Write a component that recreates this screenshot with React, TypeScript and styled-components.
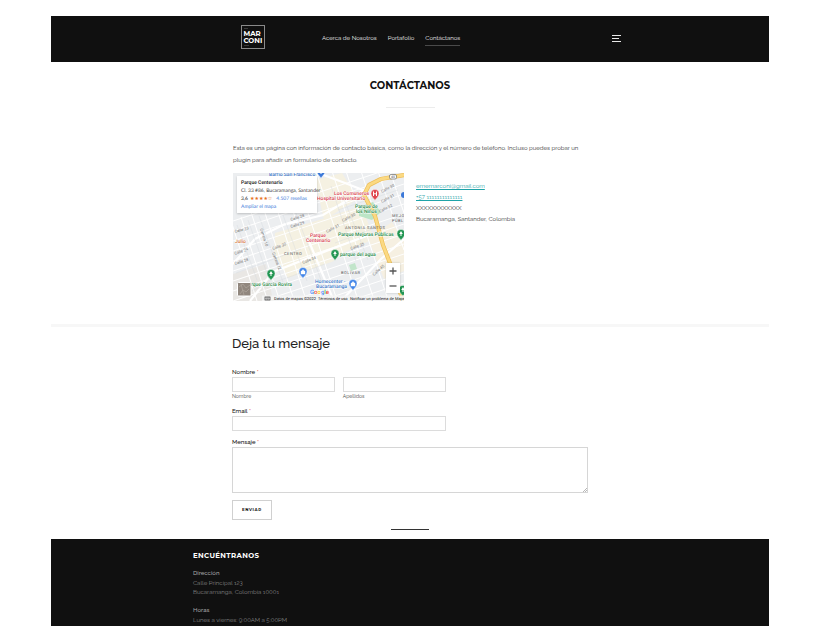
import React from 'react';
import styled, { createGlobalStyle } from 'styled-components';

const GlobalStyle = createGlobalStyle`
  *, *::before, *::after { box-sizing: border-box; }
  body {
    margin: 0;
    background: #fff;
    color: #333;
    font: 6px/12px Raleway, "Open Sans", sans-serif;
  }
  h1, h2, p, address { margin: 0; font-style: normal; }
  input, textarea, button { font-family: inherit; }
`;

const Page = styled.div`
  display: flex;
  flex-direction: column;
  padding: 16px 51px 0;
`;

const Header = styled.header`
  background: #101010;
  padding: 9px 0 13px;
`;

const Container = styled.div`
  width: 100%;
  max-width: 434px;
  margin: 0 auto;
`;

const HeaderBar = styled(Container)`
  display: flex;
  align-items: center;
  height: 24px;
  padding: 0 6px 0 48px;
`;

const LogoLink = styled.a`
  display: block;
  width: 24px;
  height: 24px;
`;

const Nav = styled.nav`
  display: flex;
  flex: 1;
  gap: 11px;
  margin-left: 57px;
  padding-top: 3px;
`;

const NavLink = styled.a<{ $active?: boolean }>`
  color: #f4f4f4;
  font: 6px/14px Raleway, "Open Sans", sans-serif;
  text-decoration: none;
  white-space: nowrap;
  border-bottom: 1px solid ${(p) => (p.$active ? '#4a4a4a' : 'transparent')};
`;

const MenuButton = styled.button`
  display: block;
  width: 9px;
  height: 9px;
  padding: 0;
  margin-top: 3px;
  border: 0;
  background: none;
`;

const TitleArea = styled.div`
  display: flex;
  flex-direction: column;
  align-items: center;
  gap: 14px;
  padding-top: 17px;
`;

const Title = styled.h1`
  color: #111;
  font: 700 10px/14px Montserrat, Inter, sans-serif;
`;

const Rule = styled.div<{ $dark?: boolean }>`
  width: ${(p) => (p.$dark ? 38 : 49)}px;
  height: 1px;
  margin: 0 auto;
  background: ${(p) => (p.$dark ? '#333' : '#ececec')};
`;

const Content = styled.main`
  width: 100%;
  max-width: 356px;
  margin: 0 auto;
`;

const Intro = styled.p`
  padding: 34px 8px 7px 1px;
`;

const ContactRow = styled.div`
  display: flex;
  gap: 12px;
  padding: 0 0 23px 1px;
`;

const ContactList = styled.address`
  display: flex;
  flex-direction: column;
  align-items: flex-start;
  padding-top: 7px;
  line-height: 11px;
`;

const ContactLink = styled.a`
  color: #1fa3a8;
`;

const MapBox = styled.div`
  position: relative;
  flex: 0 0 171px;
  height: 128px;
  overflow: hidden;
  font-family: Roboto, sans-serif;
`;

const MapArt = styled.svg`
  display: block;
  width: 100%;
  height: 100%;
  font-family: Roboto, sans-serif;
  text-rendering: geometricPrecision;
`;

const PlaceCard = styled.div`
  position: absolute;
  top: 3px;
  left: 4px;
  width: 80px;
  padding: 3px 4px 2px;
  background: #fff;
  box-shadow: 0 1px 2px #0003;
  color: #444;
  font: 5px/8px Lato, sans-serif;
  white-space: nowrap;
  text-rendering: geometricPrecision;
`;

const PlaceName = styled.strong`
  display: block;
  color: #111;
  font-family: Roboto, sans-serif;
  font-weight: 500;
`;

const Rating = styled.div`
  display: flex;
  align-items: center;
  gap: 2px;
  color: #222;
`;

const Stars = styled.span`
  color: #e7711b;
  font: 5px/8px "DejaVu Sans", sans-serif;
`;

const MapLink = styled.a<{ $spaced?: boolean }>`
  color: #3b78d8;
  text-decoration: none;
  margin-left: ${(p) => (p.$spaced ? 2 : 0)}px;
`;

const ZoomControls = styled.div`
  position: absolute;
  right: 4px;
  bottom: 8px;
  display: flex;
  flex-direction: column;
  background: #fff;
  box-shadow: 0 0 2px #0003;
`;

const ZoomButton = styled.button`
  display: grid;
  place-items: center;
  width: 14px;
  height: 15px;
  padding: 0;
  border: 0;
  background: none;
`;

const Divider = styled.div`
  height: 3px;
  background: #f7f7f7;
`;

const Form = styled.form`
  display: flex;
  flex-direction: column;
  align-items: flex-start;
  padding-bottom: 9px;
`;

const FormTitle = styled.h2`
  padding: 7px 0 13px;
  color: #222;
  font: 500 13px/20px Raleway, Lato, sans-serif;
`;

const Field = styled.div<{ $full?: boolean }>`
  display: flex;
  flex-direction: column;
  width: ${(p) => (p.$full ? '100%' : '60%')};
  margin-bottom: ${(p) => (p.$full ? 7 : 6)}px;
`;

const NameFields = styled.fieldset`
  width: 60%;
  min-width: 0;
  margin: 0 0 5px;
  padding: 0;
  border: 0;
`;

const Legend = styled.legend`
  padding: 0;
  color: #111;
  font: 500 6px/10px Raleway, "Open Sans", sans-serif;
`;

const Label = styled.label`
  color: #111;
  font: 500 6px/10px Raleway, "Open Sans", sans-serif;
`;

const Required = styled.span`
  color: #e03c3c;
`;

const NameColumns = styled.div`
  display: grid;
  grid-template-columns: 1fr 1fr;
  gap: 8px;
`;

const NameColumn = styled.div`
  display: flex;
  flex-direction: column;
`;

const SubLabel = styled.label`
  color: #444;
  font: 5px/9px Raleway, "Open Sans", sans-serif;
`;

const Input = styled.input`
  width: 100%;
  height: 15px;
  padding: 2px 4px;
  border: 1px solid #dcdcdc;
  border-radius: 0;
  font-size: 6px;
`;

const Textarea = styled.textarea`
  width: 100%;
  height: 46px;
  padding: 3px 4px;
  border: 1px solid #d6d6d6;
  border-radius: 0;
  font-size: 6px;
  resize: none;
`;

const MessageBox = styled.div`
  position: relative;
  display: flex;
`;

const Grip = styled.svg`
  position: absolute;
  right: 1px;
  bottom: 1px;
  pointer-events: none;
`;

const SubmitButton = styled.button`
  padding: 4px 9px;
  border: 1px solid #d0d0d0;
  background: #fff;
  color: #111;
  font: 700 4px/10px Montserrat, Inter, sans-serif;
  letter-spacing: 0.15em;
`;

const Footer = styled.footer`
  margin-top: 9px;
  padding: 10px 0 2px;
  background: #101010;
  color: #858585;
`;

const FooterTitle = styled.h2`
  padding-bottom: 6px;
  color: #fff;
  font: 700 7px/13px Montserrat, Inter, sans-serif;
  letter-spacing: 0.05em;
`;

const FooterBlock = styled.div<{ $last?: boolean }>`
  font: 6px/9px Raleway, Lato, sans-serif;
  margin-bottom: ${(p) => (p.$last ? 0 : 9)}px;
`;

const FooterLabel = styled.h3`
  margin: 0;
  color: #a5a5a5;
  font: 500 6px/10px Raleway, Lato, sans-serif;
`;

function Logo() {
  return (
    <svg width="24" height="24" viewBox="0 0 24 24" role="img" aria-label="Marconi">
      <rect x="0.5" y="0.5" width="23" height="23" fill="#101010" stroke="#8a8a8a" />
      <path d="M3 3.5h4M3 20.500h5" stroke="#555" strokeWidth="0.6" />
      <g fill="#fff" fontFamily="Montserrat, Inter, sans-serif" fontWeight="700" fontSize="7">
        <text x="2.5" y="11">MAR</text>
        <text x="2.5" y="18">CONI</text>
      </g>
    </svg>
  );
}

function Pin({ x, y, color, children }: { x: number; y: number; color: string; children?: React.ReactNode }) {
  return (
    <g transform={`translate(${x} ${y})`}>
      <path d="M0 6.500C-.8 4-4 2.800-4-.600a4 4 0 0 1 8 0C4 2.800.8 4 0 6.500Z" fill={color} stroke="#fff" strokeWidth="0.4" />
      {children ?? <path d="M0-3 1.800 0H.5v2h-1V0h-1.300Z" fill="#fff" />}
    </g>
  );
}

const streets: [number, number, number, string][] = [
  [58, 55, -18, 'Calle 29'],
  [58, 48, -18, 'Calle 28'],
  [40, 77, -20, 'Calle 30'],
  [70, 91, -22, 'Calle 34'],
  [110, 49, -28, 'Calle 30'],
  [94, 60, -28, 'Calle 31'],
  [149, 20, -28, 'Calle 30'],
  [149, 30, -28, 'Calle 31'],
  [147, 40, -28, 'Calle 32'],
  [118, 77, -20, 'Calle 35'],
  [141, 103, -42, 'Calle 45'],
  [39, 80, 68, 'Carrera 12'],
  [2, 60, -15, 'Calle 23'],
  [2, 82, -20, 'Calle 24'],
  [2, 92, -18, 'Calle 28'],
  [27, 56, 72, 'Carrera 10'],
];

function CityMap() {
  return (
    <MapArt viewBox="0 0 171 128" role="img" aria-label="Mapa de Bucaramanga">
      <rect width="171" height="128" fill="#eceef0" />
      <path d="M42 60 93 45l8 43-46 17-14-25ZM82 7l27-7 16 26-34 21ZM91 45l38-12 12 33-41 18Z" fill="#f8f1df" opacity=".8" />
      <path d="m135 65 24-16 12 19v30l-20 8Z" fill="#f6f0e2" />
      <path d="m0 101 33-10 7 37H0Z" fill="#e9e7e4" />
      <g stroke="#fff" strokeWidth="1.100" fill="none" opacity=".95">
        <path d="M0 48 171-9M0 58 171 1M0 68 171 11M0 78 171 21M0 88 171 31M0 98 171 41M0 108 171 51M0 118 171 61M0 128 171 71M24 130l147-49M52 130l119-40M81 130l90-30M110 130l61-20" />
        <path d="m-2 48 26 80M8 44l28 88M18 39l30 93M31 37l31 93M44 36l30 94M58 32l32 98M71 28l34 102M83-2l43 132M99-2l43 132M113-2l43 132M128-2l43 132M145-2l26 79M157-2l14 42" />
      </g>
      <g stroke="#fff" strokeWidth="2.200" fill="none">
        <path d="M0 91 22 66l28-14 40-10 43-26M17 128l23-29 61-24 35-13M85 0l27 10 23 9M108 128l40-42 23-20M75 66l25 60" />
      </g>
      <g stroke="#d5d9dd" strokeWidth=".4" fill="none">
        <path d="m4 52 20 55M15 47l22 62M26 43l24 66M50 42l24 66M61 35l27 72M98 13l25 75M111 26l24 61M3 100l65-24M12 120l80-29M105 37l60-20M102 70l45-17" />
      </g>
      <path d="m126 34 14-5 8 10-9 8-13-4Z" fill="#bce5c6" />
      <path d="m116 92 6-2 2 6-6 2Z" fill="#c2e5ca" />
      <g fill="none" strokeLinejoin="round" strokeLinecap="round">
        <path d="M171 2 148 6l-12 6-5 10 11 21 8 29 10 26 10 30" stroke="#edbe58" strokeWidth="4.200" />
        <path d="M171 2 148 6l-12 6-5 10 11 21 8 29 10 26 10 30" stroke="#fbd982" strokeWidth="2.800" />
      </g>
      <g fill="#777" fontSize="4">
        {streets.map(([x, y, angle, name], i) => (
          <text key={i} transform={`translate(${x} ${y}) rotate(${angle})`}>{name}</text>
        ))}
      </g>
      <g fill="#555" fontSize="4" letterSpacing=".5">
        <text x="112" y="56">ANTONIA SANTOS</text>
        <text x="51" y="82">CENTRO</text>
        <text x="108" y="101">BOLÍVAR</text>
        <text x="159" y="44">MEJO</text>
        <text x="159" y="49">PÚBL</text>
      </g>
      <g fontSize="5" fontWeight="500" stroke="#fff" strokeWidth=".8" paintOrder="stroke">
        <text x="36" y="3" fill="#3975c6">Barrio San Francisco</text>
        <text x="101" y="22" fill="#d8434e">Los Comuneros</text>
        <text x="84" y="27" fill="#d8434e">Hospital Universitario</text>
        <text x="122" y="35" fill="#258847">Parque de</text>
        <text x="123" y="40" fill="#258847">los Niños</text>
        <text x="105" y="63" fill="#258847">Parque Mejoras Públicas</text>
        <text x="77" y="64" fill="#d8434e">Parque</text>
        <text x="73" y="69" fill="#d8434e">Centenario</text>
        <text x="107" y="83" fill="#258847">parque del agua</text>
        <text x="2" y="70" fill="#d77a43">Julio</text>
        <text x="18" y="113" fill="#258847">rque García Rovira</text>
        <text x="82" y="110" fill="#3975c6">Homecenter -</text>
        <text x="83" y="115" fill="#3975c6">Bucaramanga</text>
      </g>
      <Pin x={88} y={-1} color="#3b78d8" />
      <Pin x={142} y={21} color="#df444d"><path d="M-1.500-2.500v4.500M1.500-2.500v4.500M-1.500-.2h3" stroke="#fff" /></Pin>
      <Pin x={168} y={61} color="#239653" />
      <Pin x={102} y={81} color="#239653" />
      <Pin x={38} y={101} color="#239653" />
      <Pin x={70} y={99} color="#4285e8"><path d="M-2-1h4v3h-4ZM-1-1q1-3 2 0" fill="#fff" stroke="#fff" strokeWidth=".4" /></Pin>
      <Pin x={120} y={111} color="#4285e8"><path d="M-2-1h4v3h-4ZM-1-1q1-3 2 0" fill="#fff" stroke="#fff" strokeWidth=".4" /></Pin>
      <Pin x={170} y={117} color="#239653" />
      <circle cx="171" cy="22" r="3" fill="#3b78d8" />
      <rect x="156.500" y="1.500" width="7" height="4.500" rx="1.500" fill="#fff" stroke="#555" strokeWidth=".6" />
      <text x="158" y="5.200" fontSize="3.500" fill="#444">45</text>
      <rect x="29" y="122.500" width="142" height="5.500" fill="#f5f5f5" opacity=".85" />
      <rect x="4.500" y="109.500" width="13.500" height="13.500" rx="1" fill="#91877e" stroke="#fff" />
      <path d="m6 114 4-3 3 4 4-3M7 121l3-4 3 2 3-3M8 111l3 11" stroke="#aca399" strokeWidth=".8" fill="none" />
      <text x="77" y="121" fontSize="6" fontWeight="500" stroke="#fff" strokeWidth=".8" paintOrder="stroke">
        <tspan fill="#4285f4">G</tspan><tspan fill="#ea4335">o</tspan><tspan fill="#fbbc05">o</tspan><tspan fill="#4285f4">g</tspan><tspan fill="#34a853">l</tspan><tspan fill="#ea4335">e</tspan>
      </text>
      <rect x="32" y="124" width="5" height="3" fill="none" stroke="#333" strokeWidth=".7" />
      <path d="M33 125h3M33.500 126.200h2" stroke="#333" strokeWidth=".5" />
      <g fill="#111" fontSize="4">
        <text x="41" y="127">Datos de mapas ©2022</text>
        <text x="85" y="127">Términos de uso</text>
        <text x="117" y="127">Notificar un problema de Maps</text>
      </g>
    </MapArt>
  );
}

export default function App() {
  return (
    <>
      <GlobalStyle />
      <Page>
        <Header>
          <HeaderBar>
            <LogoLink href="#"><Logo /></LogoLink>
            <Nav>
              <NavLink href="#nosotros">Acerca de Nosotros</NavLink>
              <NavLink href="#portafolio">Portafolio</NavLink>
              <NavLink href="#contacto" $active>Contáctanos</NavLink>
            </Nav>
            <MenuButton aria-label="Menú">
              <svg width="9" height="9" viewBox="0 0 9 9" display="block">
                <path d="M0 1.500h9M0 4.500h7M0 7.500h9" stroke="#e8e8e8" />
              </svg>
            </MenuButton>
          </HeaderBar>
        </Header>

        <TitleArea>
          <Title>CONTÁCTANOS</Title>
          <Rule />
        </TitleArea>

        <Content as="section">
          <Intro>
            Esta es una página con información de contacto básica, como la dirección y el número de teléfono. Incluso puedes probar un plugin para añadir un formulario de contacto.
          </Intro>
          <ContactRow>
            <MapBox>
              <CityMap />
              <PlaceCard>
                <PlaceName>Parque Centenario</PlaceName>
                <div>Cl. 33 #86, Bucaramanga, Santander</div>
                <Rating>
                  3,6 <Stars aria-hidden>★★★★☆</Stars>
                  <MapLink href="#resenas" $spaced>4.507 reseñas</MapLink>
                </Rating>
                <MapLink href="#mapa">Ampliar el mapa</MapLink>
              </PlaceCard>
              <ZoomControls>
                <ZoomButton aria-label="Acercar">
                  <svg width="8" height="8" viewBox="0 0 8 8"><path d="M4 .5v7M.5 4h7" stroke="#555" strokeWidth="1.300" /></svg>
                </ZoomButton>
                <ZoomButton aria-label="Alejar">
                  <svg width="8" height="8" viewBox="0 0 8 8"><path d="M.5 4h7" stroke="#555" strokeWidth="1.300" /></svg>
                </ZoomButton>
              </ZoomControls>
            </MapBox>
            <ContactList>
              <ContactLink href="mailto:ememarconi@gmail.com">ememarconi@gmail.com</ContactLink>
              <ContactLink href="tel:+5711111111111111">+57 11111111111111</ContactLink>
              <span>XXXXXXXXXXXX</span>
              <span>Bucaramanga, Santander, Colombia</span>
            </ContactList>
          </ContactRow>
        </Content>

        <Divider />

        <Content>
          <Form onSubmit={(e) => e.preventDefault()}>
            <FormTitle>Deja tu mensaje</FormTitle>
            <NameFields>
              <Legend>Nombre <Required>*</Required></Legend>
              <NameColumns>
                <NameColumn>
                  <Input id="nombre" />
                  <SubLabel htmlFor="nombre">Nombre</SubLabel>
                </NameColumn>
                <NameColumn>
                  <Input id="apellidos" />
                  <SubLabel htmlFor="apellidos">Apellidos</SubLabel>
                </NameColumn>
              </NameColumns>
            </NameFields>
            <Field>
              <Label htmlFor="email">Email <Required>*</Required></Label>
              <Input id="email" type="email" />
            </Field>
            <Field $full>
              <Label htmlFor="mensaje">Mensaje <Required>*</Required></Label>
              <MessageBox>
                <Textarea id="mensaje" />
                <Grip width="5" height="5" viewBox="0 0 5 5" aria-hidden>
                  <path d="M1 5 5 1M3 5l2-2" stroke="#888" strokeWidth=".6" />
                </Grip>
              </MessageBox>
            </Field>
            <SubmitButton type="submit">ENVIAR</SubmitButton>
          </Form>
          <Rule $dark />
        </Content>

        <Footer>
          <Container>
            <FooterTitle>ENCUÉNTRANOS</FooterTitle>
            <FooterBlock>
              <FooterLabel>Dirección</FooterLabel>
              <p>Calle Principal 123</p>
              <p>Bucaramanga, Colombia 10001</p>
            </FooterBlock>
            <FooterBlock $last>
              <FooterLabel>Horas</FooterLabel>
              <p>Lunes a viernes: 9:00AM a 5:00PM</p>
            </FooterBlock>
          </Container>
        </Footer>
      </Page>
    </>
  );
}
